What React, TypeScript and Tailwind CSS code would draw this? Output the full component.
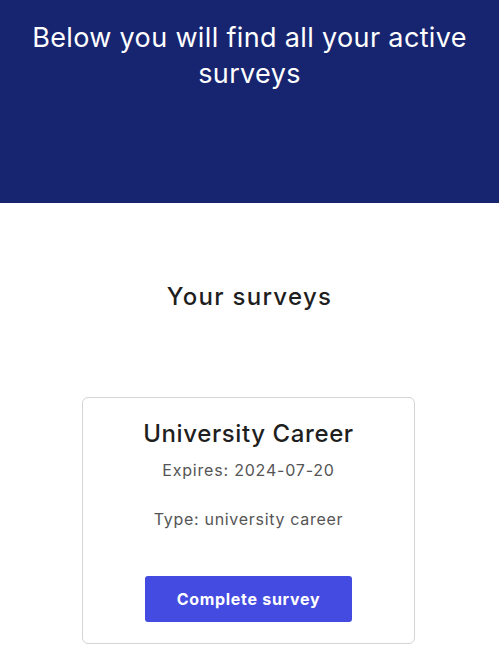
import React from 'react';

const surveys = [
  { title: 'University Career', expires: '2024-07-20', type: 'university career' },
];

export default function App() {
  return (
    <div className="min-h-screen bg-white font-['Inter','Noto_Sans',sans-serif] text-[#222]">
      <header className="h-[203px] bg-[#172570] px-6 pt-[20px]">
        <h1 className="text-center text-[27px] leading-[36px] font-normal tracking-[0.35px] text-white">
          Below you will find all your active surveys
        </h1>
      </header>

      <main className="flex flex-col items-center px-6">
        <h2 className="mt-[78px] text-[24px] leading-[32px] font-medium tracking-[1.3px] text-[#1f1f1f]">Your surveys</h2>

        <div className="mt-[84px] mb-4 flex w-full flex-col items-center gap-4">
          {surveys.map((s) => (
            <div
              key={s.title}
              className="-ml-[2px] flex w-[333px] flex-col items-center rounded-md border border-[#d4d4d4] px-6 pt-[20px] pb-[21px]"
            >
              <h3 className="text-[24px] leading-[32px] font-medium tracking-[0.6px] text-[#1f1f1f]">{s.title}</h3>
              <p className="mt-[8px] text-[16px] leading-[24px] tracking-[0.8px] text-[#555]">Expires: {s.expires}</p>
              <p className="mt-[25px] text-[16px] leading-[24px] tracking-[0.7px] text-[#555]">Type: {s.type}</p>
              <button className="mt-[45px] h-[46px] w-[207px] rounded-[3px] bg-[#444be0] text-[16px] font-bold tracking-[0.7px] text-white">
                Complete survey
              </button>
            </div>
          ))}
        </div>
      </main>
    </div>
  );
}
